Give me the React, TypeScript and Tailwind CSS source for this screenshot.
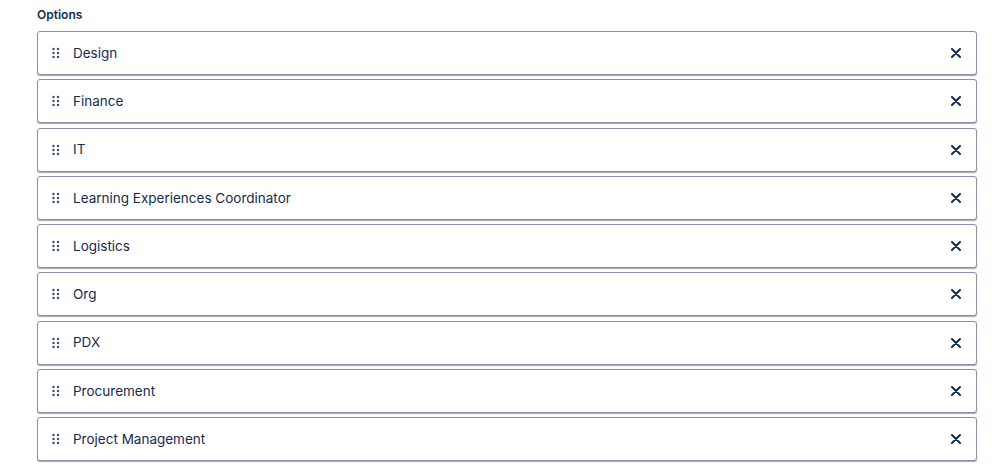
import React from "react";

const items = [
  "Design",
  "Finance",
  "IT",
  "Learning Experiences Coordinator",
  "Logistics",
  "Org",
  "PDX",
  "Procurement",
  "Project Management",
];

function DragHandle() {
  return (
    <svg width="8" height="12" viewBox="0 0 8 12" className="shrink-0">
      {[0, 1].map((c) =>
        [0, 1, 2].map((r) => (
          <circle key={`${c}-${r}`} cx={1.5 + c * 4.5} cy={2 + r * 4} r={1.25} fill="#42526e" />
        ))
      )}
    </svg>
  );
}

function CloseIcon() {
  return (
    <svg width="10" height="10" viewBox="0 0 10 10" className="shrink-0">
      <path d="M1 1 L9 9 M9 1 L1 9" stroke="#172b4d" strokeWidth="2" strokeLinecap="round" />
    </svg>
  );
}

export default function App() {
  return (
    <div
      className="w-[999px] h-[464px] bg-white overflow-hidden pl-[37px] pr-[22px] pt-[7px]"
      style={{ fontFamily: 'Inter, "Liberation Sans", Arial, sans-serif' }}
    >
      <div className="text-[12px] font-semibold text-[#172b4d] leading-[16px] mb-[8px]">Options</div>
      <div className="flex flex-col gap-[4.25px]">
        {items.map((it) => (
          <div
            key={it}
            className="h-[44px] flex items-center border border-[#8993a4] rounded-[3px] bg-white shadow-[0_1px_1px_rgba(9,30,66,0.4)] pl-[14px] pr-[15px]"
          >
            <DragHandle />
            <span className="ml-[13px] flex-1 text-[13.5px] text-[#172b4d]">{it}</span>
            <CloseIcon />
          </div>
        ))}
      </div>
    </div>
  );
}
